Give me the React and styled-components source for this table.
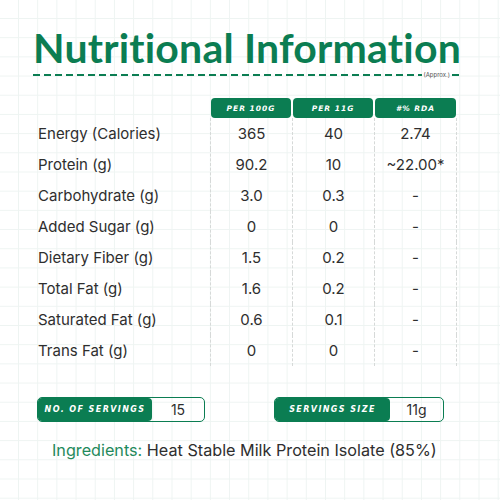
import React from 'react';
import styled, { createGlobalStyle } from 'styled-components';

const GREEN = '#0b7d52';

const GlobalStyle = createGlobalStyle`
  html, body {
    margin: 0;
    padding: 0;
    background: #fff;
  }
  body {
    font-family: Inter, "Open Sans", sans-serif;
  }
`;

const Page = styled.div`
  width: 500px;
  height: 500px;
  box-sizing: border-box;
  padding: 26px 38px 0 33px;
  background-color: #fff;
  background-image:
    linear-gradient(to right, #eef4f2 1px, transparent 1px),
    linear-gradient(to bottom, #eef4f2 1px, transparent 1px);
  background-size: 19.2px 19.2px;
  background-position: 18px 18px;
  overflow: hidden;
`;

const Title = styled.h1`
  margin: 0;
  font-family: Lato, sans-serif;
  font-weight: 700;
  font-size: 41px;
  line-height: 44px;
  color: ${GREEN};
  letter-spacing: 0.2px;
  white-space: nowrap;
`;

const Rule = styled.div`
  display: flex;
  align-items: center;
  gap: 2px;
  width: 429px;
  margin-top: 1px;
`;

const Dashes = styled.div`
  flex: ${p => (p.$grow ? 1 : 'none')};
  width: ${p => (p.$grow ? 'auto' : '10px')};
  height: 2px;
  background: repeating-linear-gradient(to right, ${GREEN} 0 7px, transparent 7px 11px);
`;

const Approx = styled.span`
  font-size: 6px;
  color: #555;
  font-family: Inter, sans-serif;
`;

const Table = styled.div`
  display: grid;
  grid-template-columns: 172px 82px 82px 83px;
  margin-top: 20px;
  margin-left: 5px;
`;

const HeadCell = styled.div`
  height: 20px;
  margin: 0 1px;
  border-radius: 4px;
  background: ${GREEN};
  color: #fff;
  display: flex;
  align-items: center;
  justify-content: center;
  font-family: "DejaVu Sans", sans-serif;
  font-style: italic;
  font-weight: 700;
  font-size: 7.5px;
  letter-spacing: 1px;
`;

const Blank = styled.div``;

const Label = styled.div`
  height: 31px;
  display: flex;
  align-items: center;
  font-size: 15px;
  color: #2e2e2e;
`;

const Value = styled.div`
  height: 31px;
  display: flex;
  align-items: center;
  justify-content: center;
  font-size: 15px;
  color: #2e2e2e;
  border-left: 1px dashed #d6d9d8;
  border-right: ${p => (p.$last ? '1px dashed #d6d9d8' : 'none')};
`;

const Servings = styled.div`
  display: flex;
  justify-content: space-between;
  margin: 31px 18px 0 4px;
`;

const Pill = styled.div`
  display: flex;
  width: ${p => p.$w}px;
  height: 23px;
  border: 1.5px solid ${GREEN};
  border-radius: 5px;
  overflow: hidden;
`;

const PillTag = styled.div`
  width: ${p => p.$w}px;
  background: ${GREEN};
  color: #fff;
  display: flex;
  align-items: center;
  justify-content: center;
  border-radius: 0 4px 4px 0;
  font-family: "DejaVu Sans", sans-serif;
  font-style: italic;
  font-weight: 700;
  font-size: 8px;
  letter-spacing: 1.4px;
`;

const PillValue = styled.div`
  flex: 1;
  display: flex;
  align-items: center;
  justify-content: center;
  font-size: 14px;
  color: #2e2e2e;
`;

const Ingredients = styled.p`
  margin: 18px 0 0 19px;
  font-size: 16.2px;
  color: #2e2e2e;
  white-space: nowrap;
`;

const Accent = styled.span`
  color: #1f8a5c;
`;

const rows = [
  ['Energy (Calories)', '365', '40', '2.74'],
  ['Protein (g)', '90.2', '10', '~22.00*'],
  ['Carbohydrate (g)', '3.0', '0.3', '-'],
  ['Added Sugar (g)', '0', '0', '-'],
  ['Dietary Fiber (g)', '1.5', '0.2', '-'],
  ['Total Fat (g)', '1.6', '0.2', '-'],
  ['Saturated Fat (g)', '0.6', '0.1', '-'],
  ['Trans Fat (g)', '0', '0', '-'],
];

export default function App() {
  return (
    <Page>
      <GlobalStyle />
      <Title>Nutritional Information</Title>
      <Rule>
        <Dashes $grow />
        <Approx>(Approx.)</Approx>
        <Dashes />
      </Rule>
      <Table>
        <Blank />
        <HeadCell>PER 100G</HeadCell>
        <HeadCell>PER 11G</HeadCell>
        <HeadCell>#% RDA</HeadCell>
        {rows.map(r => (
          <React.Fragment key={r[0]}>
            <Label>{r[0]}</Label>
            <Value>{r[1]}</Value>
            <Value>{r[2]}</Value>
            <Value $last>{r[3]}</Value>
          </React.Fragment>
        ))}
      </Table>
      <Servings>
        <Pill $w={166}>
          <PillTag $w={114}>NO. OF SERVINGS</PillTag>
          <PillValue>15</PillValue>
        </Pill>
        <Pill $w={168}>
          <PillTag $w={115}>SERVINGS SIZE</PillTag>
          <PillValue>11g</PillValue>
        </Pill>
      </Servings>
      <Ingredients>
        <Accent>Ingredients:</Accent> Heat Stable Milk Protein Isolate (85%)
      </Ingredients>
    </Page>
  );
}
